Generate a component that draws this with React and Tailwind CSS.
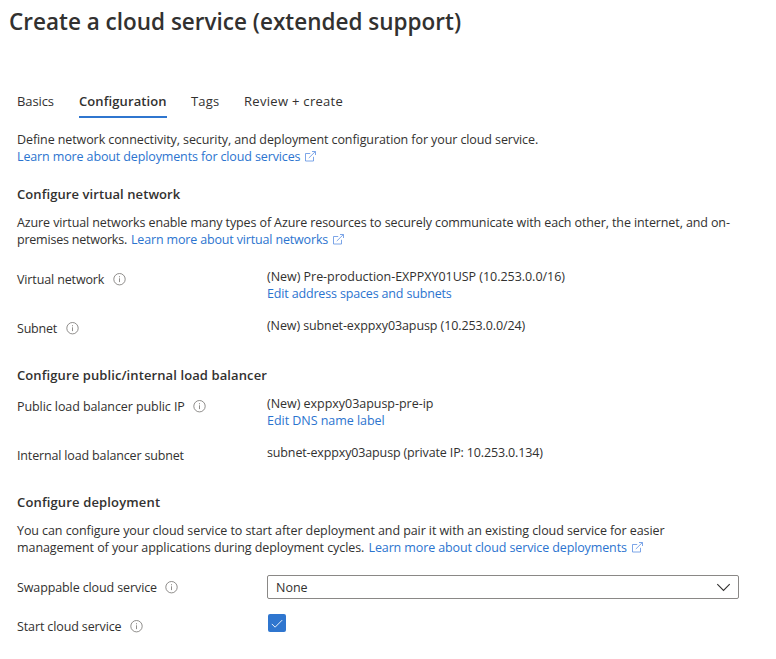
function InfoIcon() {
  return (
    <svg className="ml-[8.5px] h-[13px] w-[13px] shrink-0" viewBox="0 0 13 13" fill="none" stroke="#73716f">
      <circle cx="6.5" cy="6.2" r="5.7" strokeWidth="0.8" />
      <path d="M6.5 5.3v3.8" strokeWidth="0.8" />
      <path d="M6.5 3.2v1.1" strokeWidth="0.8" />
    </svg>
  );
}

function ExternalIcon() {
  return (
    <svg className="ml-[5px] h-[11px] w-[11px] shrink-0" viewBox="0 0 11 11" fill="none" stroke="#5c8fe2" strokeWidth="0.8">
      <path d="M5.2 2.5H.5v7.5h8V5.8" />
      <path d="M3.8 7 10.3.6M7 .5h3.5V4" />
    </svg>
  );
}

function Row({ label, info = true, className, labelClass = "", pad = "pt-[3px]", children }) {
  return (
    <div className={"flex items-start " + className}>
      <div className={"flex w-[250px] shrink-0 items-center " + pad}>
        <span className={labelClass}>{label}</span>
        {info && <InfoIcon />}
      </div>
      <div>{children}</div>
    </div>
  );
}

function Heading({ className, children }) {
  return <h2 className={"h-[18px] text-[13px] leading-[18px] font-semibold " + className}>{children}</h2>;
}

function Link({ className = "", children, external }) {
  return (
    <a className={"flex items-center text-[#2b74cf] " + className}>
      <span>{children}</span>
      {external && <ExternalIcon />}
    </a>
  );
}

export default function App() {
  return (
    <main className="h-[659px] w-[776px] overflow-hidden bg-white pt-[6px] font-['Open_Sans','Noto_Sans',sans-serif] text-[12.5px] leading-[17px] whitespace-nowrap text-[#323130]">
      <h1 className="ml-[9px] h-8 text-[22.5px] leading-8 font-semibold">Create a cloud service (extended support)</h1>
      <nav className="mt-[53px] ml-[17px] flex h-[27px] text-[13px] leading-5">
        <span className="w-[62px] tracking-[-0.1px]">Basics</span>
        <span className="w-[88px] border-b-2 border-[#2f76cf] font-semibold tracking-[0.1px]">Configuration</span>
        <span className="ml-6 w-[53px] tracking-[0.2px]">Tags</span>
        <span className="tracking-[0.3px]">Review + create</span>
      </nav>
      <div className="mt-[13px] ml-[17px]">
        <p className="tracking-[-0.092px]">Define network connectivity, security, and deployment configuration for your cloud service.</p>
        <Link external className="tracking-[-0.128px]">Learn more about deployments for cloud services</Link>

        <Heading className="mt-5 tracking-[0.08px]">Configure virtual network</Heading>
        <p className="mt-[11px] tracking-[-0.11px]">Azure virtual networks enable many types of Azure resources to securely communicate with each other, the internet, and on-</p>
        <div className="flex">
          <span className="w-[114px] tracking-[-0.22px]">premises networks.</span>
          <Link external className="tracking-[-0.16px]">Learn more about virtual networks</Link>
        </div>
        <Row label="Virtual network" labelClass="tracking-[-0.13px]" className="mt-5">
          <p className="tracking-[-0.03px]">(New) Pre-production-EXPPXY01USP (10.253.0.0/16)</p>
          <Link className="tracking-[-0.16px]">Edit address spaces and subnets</Link>
        </Row>
        <Row label="Subnet" labelClass="tracking-[-0.2px]" className="mt-[15px]">
          <p className="tracking-[-0.1px]">(New) subnet-exppxy03apusp (10.253.0.0/24)</p>
        </Row>

        <Heading className="mt-[29px] tracking-[0.1px]">Configure public/internal load balancer</Heading>
        <Row label="Public load balancer public IP" labelClass="tracking-[-0.08px]" className="mt-[11px]">
          <p className="tracking-[-0.03px]">(New) exppxy03apusp-pre-ip</p>
          <Link className="tracking-[-0.04px]">Edit DNS name label</Link>
        </Row>
        <Row label="Internal load balancer subnet" labelClass="tracking-[-0.155px]" info={false} className="mt-[15px]">
          <p className="tracking-[-0.14px]">subnet-exppxy03apusp (private IP: 10.253.0.134)</p>
        </Row>

        <Heading className="mt-[29px] tracking-[0.15px]">Configure deployment</Heading>
        <p className="mt-[11px] tracking-[-0.08px]">You can configure your cloud service to start after deployment and pair it with an existing cloud service for easier</p>
        <div className="flex">
          <span className="w-[351.5px] tracking-[-0.07px]">management of your applications during deployment cycles.</span>
          <Link external className="tracking-[-0.12px]">Learn more about cloud service deployments</Link>
        </div>
        <Row label="Swappable cloud service" labelClass="tracking-[-0.11px]" className="mt-[19px]" pad="pt-1">
          <div className="flex h-6 w-[472px] items-center justify-between rounded-[2px] border border-[#8a8886] pr-[7px] pl-2">
            <span>None</span>
            <svg className="h-[9px] w-[15px]" viewBox="0 0 15 9" fill="none" stroke="#323130" strokeWidth="1.1">
              <path d="m1.3 1.2 6.2 6.3 6.2-6.3" />
            </svg>
          </div>
        </Row>
        <Row label="Start cloud service" labelClass="tracking-[-0.12px]" className="mt-[15px]" pad="pt-1">
          <div className="ml-px flex h-[18px] w-[18px] items-center justify-center rounded-[2px] bg-[#2f76cf]">
            <svg className="h-[9px] w-3" viewBox="0 0 12 9" fill="none" stroke="white" strokeWidth="0.9">
              <path d="m.8 4.9 3.3 3.3L11.2 1.1" />
            </svg>
          </div>
        </Row>
      </div>
    </main>
  );
}
